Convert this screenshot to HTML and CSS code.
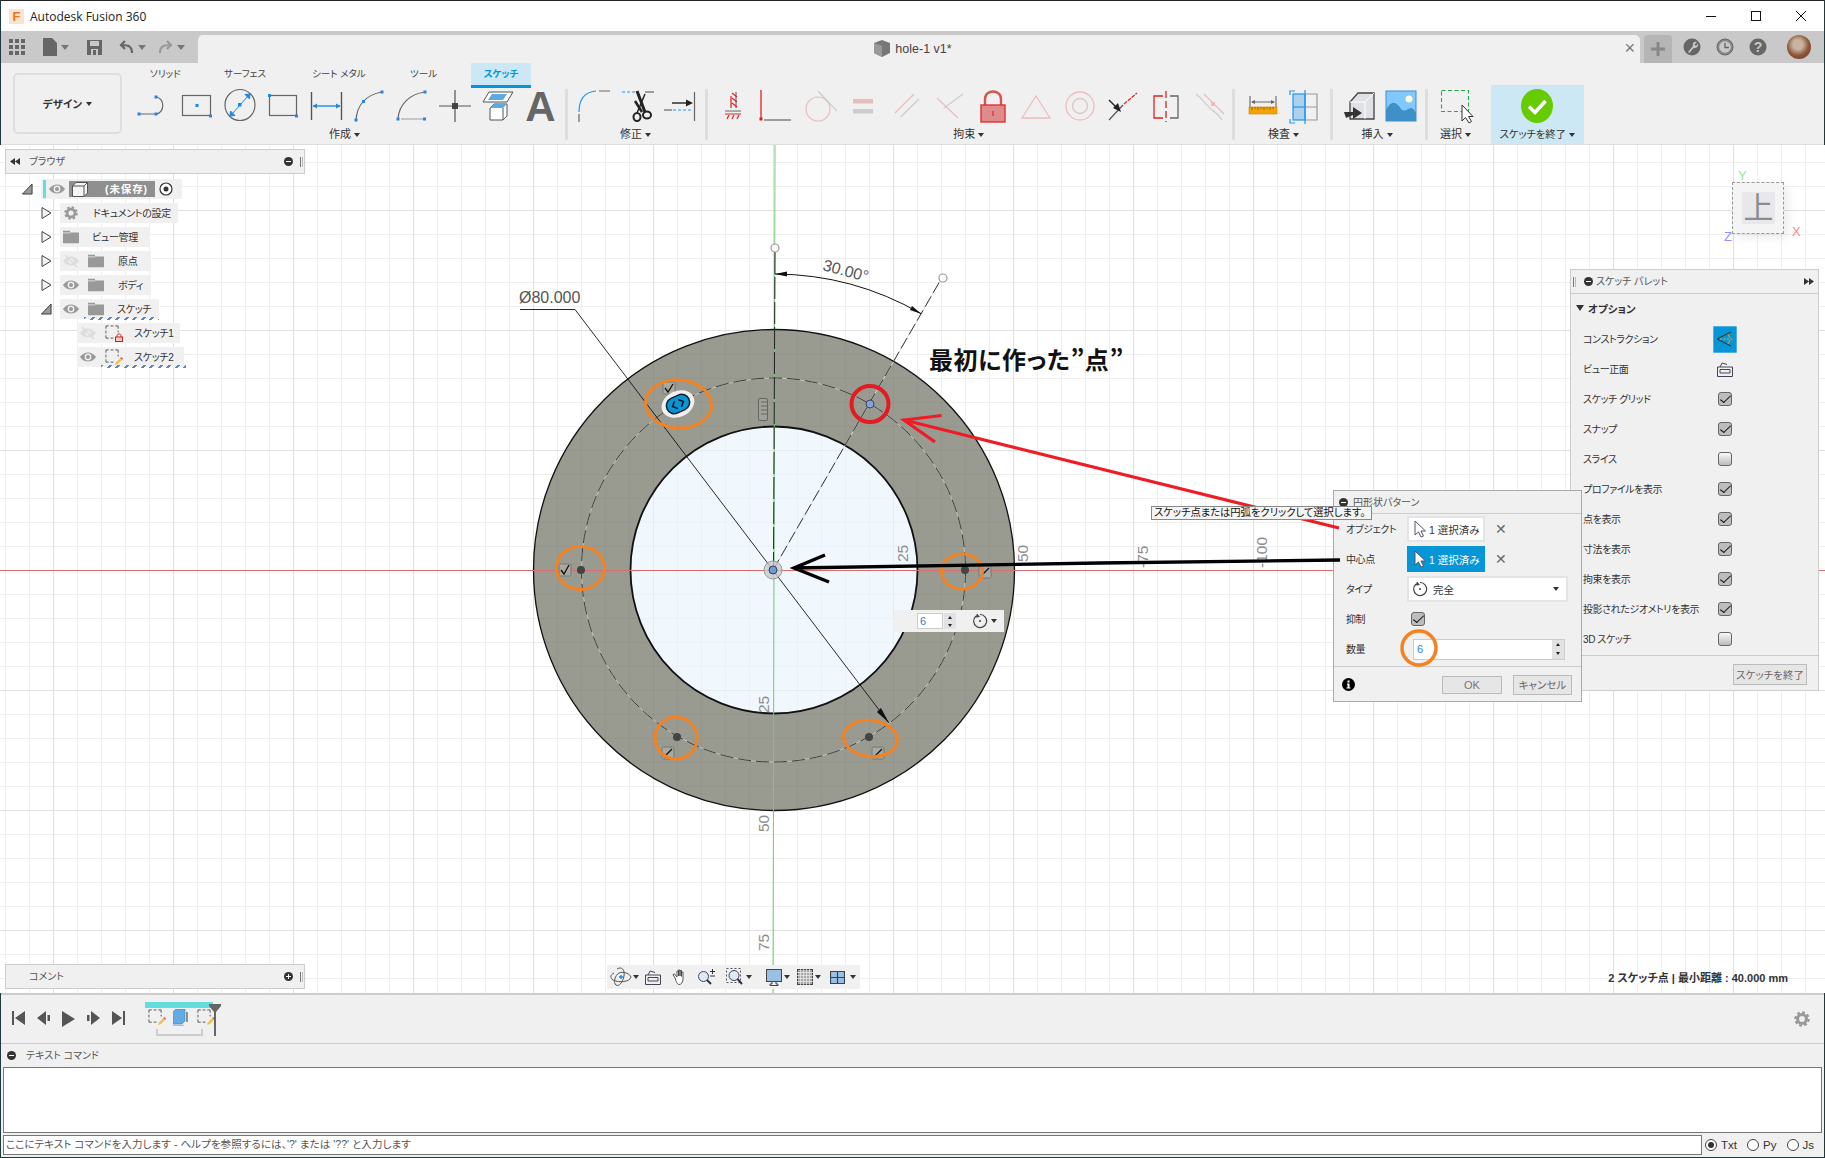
FILE: index.html
```html
<!DOCTYPE html>
<html lang="ja">
<head>
<meta charset="utf-8">
<title>Autodesk Fusion 360</title>
<link rel="stylesheet" href="styles.css">
</head>
<body>
<svg class="sprite" width="0" height="0">
  <defs>
    <symbol id="eye" viewBox="0 0 16 10"><path d="M0 5C4 -1 12 -1 16 5C12 11 4 11 0 5Z" fill="#999"/><circle cx="8" cy="5" r="3.4" fill="#f0f0f0"/><circle cx="8" cy="5" r="2" fill="#999"/></symbol>
    <symbol id="eyeoff" viewBox="0 0 16 12"><path d="M0 6C4 0 12 0 16 6C12 12 4 12 0 6Z" fill="#ddd"/><circle cx="8" cy="6" r="2.6" fill="#f0f0f0"/><path d="M2 0L14 12" stroke="#ddd" stroke-width="1.6"/></symbol>
    <symbol id="folder" viewBox="0 0 16 13"><path d="M0 0H7V2H16V13H0Z" fill="#999"/><path d="M0 2.4H7" stroke="#eee" stroke-width=".8"/></symbol>
    <symbol id="gear" viewBox="0 0 18 18"><circle cx="9" cy="9" r="5" fill="none" stroke="#999" stroke-width="3.4"/><circle cx="9" cy="9" r="7.4" fill="none" stroke="#999" stroke-width="2.6" stroke-dasharray="3.2 2.6"/></symbol>
    <symbol id="sketchbox" viewBox="0 0 16 16"><path d="M1 1H14M1 1V14M1 14H10M14 1V8" fill="none" stroke="#555" stroke-dasharray="3 2"/></symbol>
    <symbol id="cursor" viewBox="0 0 12 18"><path d="M1 1V15L4.5 12L7 17L9.5 16L7 11H11.5Z" fill="#fff" stroke="#556" stroke-width="1"/></symbol>
    <symbol id="pencil" viewBox="0 0 10 10"><path d="M1 9L2 6L7 1L9 3L4 8Z" fill="#f5c04a"/><path d="M7 1L9 3L10 2L8 0Z" fill="#e44"/></symbol>
  </defs>
</svg>

<div class="window">
  <header class="titlebar">
    <span class="logo">F</span>
    <span class="app-name">Autodesk Fusion 360</span>
    <div class="win-controls">
      <svg class="win-btn" width="14" height="14" viewBox="0 0 14 14"><path d="M2 7.5H12" stroke="#111"/></svg>
      <svg class="win-btn" width="14" height="14" viewBox="0 0 14 14"><rect x="2.5" y="2.5" width="9" height="9" fill="none" stroke="#111"/></svg>
      <svg class="win-btn" width="14" height="14" viewBox="0 0 14 14"><path d="M2 2L12 12M12 2L2 12" stroke="#111"/></svg>
    </div>
  </header>

  <div class="tabbar">
    <div class="quick">
      <svg class="q-grid" width="16" height="16" viewBox="0 0 16 16"><path d="M0 0h4v4H0zM6 0h4v4H6zM12 0h4v4h-4zM0 6h4v4H0zM6 6h4v4H6zM12 6h4v4h-4zM0 12h4v4H0zM6 12h4v4H6zM12 12h4v4h-4z" fill="#666"/></svg>
      <svg class="q-doc" width="14" height="18" viewBox="0 0 14 18"><path d="M0 0H9L14 5V18H0Z" fill="#666"/></svg>
      <i class="caret q-c1"></i>
      <svg class="q-save" width="15" height="15" viewBox="0 0 15 15"><path d="M0 0H15V15H0Z" fill="#666"/><path d="M3 1H12V6H3ZM4 9H11V15H4Z" fill="#c8c8c8"/><path d="M6 10H9V15H6Z" fill="#666"/></svg>
      <svg class="q-undo" width="14" height="14" viewBox="0 0 14 14"><path d="M13 13C13 6 9 5 3 5M6 1L2 5L6 9" fill="none" stroke="#666" stroke-width="2.2"/></svg>
      <i class="caret q-c2"></i>
      <svg class="q-redo" width="14" height="14" viewBox="0 0 14 14"><path d="M1 13C1 6 5 5 11 5M8 1L12 5L8 9" fill="none" stroke="#999" stroke-width="2.2"/></svg>
      <i class="caret q-c3"></i>
    </div>
    <div class="doc-tab">
      <svg class="doc-cube" width="16" height="17" viewBox="0 0 16 17"><path d="M8 0L16 3V13L8 17L0 13V3Z" fill="#777"/><path d="M0 3L8 6V17L0 13Z" fill="#999"/></svg>
      <span class="doc-name">hole-1 v1*</span>
      <span class="doc-close">×</span>
    </div>
    <div class="plus-tab"><svg width="14" height="14" viewBox="0 0 14 14"><path d="M7 0V14M0 7H14" stroke="#888" stroke-width="3"/></svg></div>
    <div class="account">
      <svg width="18" height="18" viewBox="0 0 18 18"><circle cx="9" cy="9" r="8.5" fill="#666"/><path d="M5 14L10 8C9 5 11 3 14 4L11.5 6.5L13 8L15 5.5C16 8 13 11 10.5 10L6.5 15Z" fill="#c8c8c8"/></svg>
      <svg width="18" height="18" viewBox="0 0 18 18"><circle cx="9" cy="9" r="8" fill="#888" stroke="#666"/><circle cx="9" cy="9" r="5.8" fill="#c8c8c8"/><path d="M9 5V9.5H13" fill="none" stroke="#666" stroke-width="1.4"/></svg>
      <svg width="18" height="18" viewBox="0 0 18 18"><circle cx="9" cy="9" r="8.5" fill="#666"/><text class="q-mark" x="9" y="13.5">?</text></svg>
      <span class="avatar"></span>
    </div>
  </div>

  <div class="ribbon">
    <div class="design-btn">デザイン <i class="caret dark"></i></div>
    <div class="ribbon-main">
      <nav class="tabs">
        <span class="tab t1">ソリッド</span>
        <span class="tab t2">サーフェス</span>
        <span class="tab t3">シート メタル</span>
        <span class="tab t4">ツール</span>
        <span class="tab active">スケッチ</span>
      </nav>
      <div class="tools">
        <section class="group g-create">
          <div class="icons">
            <svg class="tool" viewBox="0 0 36 36"><path d="M3 26H20M20 9C29 10 29 25 20 26" fill="none" stroke="#666" stroke-width="1.2"/><path d="M1.500 24.500h3v3h-3zM18.500 24.500h3v3h-3zM18.500 7.500h3v3h-3z" fill="#1e88e5"/></svg>
            <svg class="tool" viewBox="0 0 36 36"><rect x="3.500" y="7.500" width="28" height="20" fill="none" stroke="#666" stroke-width="1.2"/><path d="M16.500 16h3v3h-3zM30 26.500h3v3h-3z" fill="#1e88e5"/></svg>
            <svg class="tool" viewBox="0 0 36 36"><ellipse cx="18" cy="17" rx="15" ry="15.500" fill="#f0f0f0" stroke="#666" stroke-width="1.2"/><path d="M10 26L26 8M8 28L13 27.500 8.500 23ZM28 6L23 6.500 27.500 11Z" fill="#1e88e5" stroke="#1e88e5"/><rect x="16" y="15" width="3.500" height="3.500" fill="#1e88e5"/></svg>
            <svg class="tool" viewBox="0 0 36 36"><rect x="4.500" y="7.500" width="27" height="20" fill="none" stroke="#666" stroke-width="1.2"/><path d="M3 6h3v3H3zM30 26.500h3v3h-3z" fill="#1e88e5"/></svg>
            <svg class="tool" viewBox="0 0 36 36"><path d="M3.500 4V32M33.500 4V32" stroke="#555" stroke-width="1.4"/><path d="M5 18H32" stroke="#1e88e5" stroke-width="1.4"/><path d="M4.500 18L9 15.500V20.500ZM32.500 18L28 15.500V20.500Z" fill="#1e88e5"/></svg>
            <svg class="tool" viewBox="0 0 36 36"><path d="M5 32C6 18 14 7 31 4" fill="none" stroke="#666" stroke-width="1.2"/><path d="M3.500 30.500h3v3h-3zM29.500 2.500h3v3h-3zM11 12h3v3h-3z" fill="#1e88e5"/></svg>
            <svg class="tool" viewBox="0 0 36 36"><path d="M4 31C5 16 16 6 31 4" fill="none" stroke="#666" stroke-width="1.2"/><path d="M7 31H29" stroke="#aaa" stroke-width="1.2"/><path d="M2.500 29.500h3v3h-3zM29 29.500h3v3h-3zM29.500 2.500h3v3h-3z" fill="#1e88e5"/></svg>
            <svg class="tool" viewBox="0 0 36 36"><path d="M18 2V34M2 18H34" stroke="#555" stroke-width="1.2"/><rect x="15" y="15" width="6" height="6" fill="#444"/></svg>
            <svg class="tool" viewBox="0 0 36 36"><path d="M9 4H33L27 14H3Z" fill="#fff" stroke="#555"/><path d="M12 6H27L23 12H8Z" fill="#5ea9e2"/><path d="M10 20L14 16H27V28L23 32H10Z" fill="#fff" stroke="#555"/><path d="M10 20H23L27 16H14Z" fill="#5ea9e2"/><path d="M23 20V32" stroke="#555"/></svg>
            <span class="tool big-a">A</span>
          </div>
          <div class="group-label">作成 <i class="caret dark"></i></div>
        </section>
        <i class="sep s1"></i>
        <section class="group g-modify">
          <div class="icons">
            <svg class="tool" viewBox="0 0 36 36"><path d="M2 24C2 11 8 4 19 3" fill="none" stroke="#2196f3" stroke-width="1.2"/><path d="M22 3H33M2 26V34" stroke="#666" stroke-width="1.2"/></svg>
            <svg class="tool" viewBox="0 0 36 36"><path d="M2 4H18" stroke="#2196f3" stroke-width="1.2" stroke-dasharray="3 2"/><path d="M25 4H34" stroke="#666" stroke-width="1.2"/><path d="M17 3L25 24" stroke="#222" stroke-width="3"/><path d="M25 6L17 25" stroke="#222" stroke-width="1.5"/><path d="M15 13L22 24" stroke="#222" stroke-width="2.500"/><ellipse cx="17" cy="29" rx="3.500" ry="4" fill="none" stroke="#222" stroke-width="2"/><ellipse cx="27" cy="27" rx="4" ry="3.500" fill="none" stroke="#222" stroke-width="2"/></svg>
            <svg class="tool" viewBox="0 0 36 36"><path d="M31.500 4V33" stroke="#666" stroke-width="1.2"/><path d="M9 15H25" stroke="#222" stroke-width="1.4"/><path d="M30 15L23 11.500V18.500Z" fill="#222"/><path d="M1 22H9" stroke="#666" stroke-width="1.2"/><path d="M10 22H30" stroke="#2196f3" stroke-width="1.2" stroke-dasharray="3 2"/></svg>
          </div>
          <div class="group-label">修正 <i class="caret dark"></i></div>
        </section>
        <i class="sep s2"></i>
        <section class="group g-constraint">
          <div class="icons">
            <svg class="ctool" viewBox="0 0 36 36"><path d="M21 4V20" stroke="#555"/><path d="M17 5L22 9M17 10L22 14M17 15L22 19M16 8V20" stroke="#d22" stroke-width="1.2"/><path d="M10 23H26" stroke="#666"/><path d="M10 26H26" stroke="#d22"/><path d="M12 31L14 27M17 31L19 27M22 31L24 27" stroke="#d22" stroke-width="1.2"/></svg>
            <svg class="ctool" viewBox="0 0 36 36"><path d="M3 2V30" stroke="#d22" stroke-width="1.300"/><rect x="1.500" y="29.500" width="3" height="3" fill="#c22"/><path d="M6 32H33" stroke="#666" stroke-width="1.200"/></svg>
            <svg class="ctool" viewBox="0 0 36 36"><circle cx="17" cy="21" r="12" fill="none" stroke="#eebcbc" stroke-width="1.200"/><path d="M17 3L36 23" stroke="#ccc" stroke-width="1.200"/></svg>
            <svg class="ctool" viewBox="0 0 36 36"><rect x="8" y="11" width="20" height="4.500" fill="#e8bcbc"/><rect x="8" y="21" width="20" height="4.500" fill="#ccc"/></svg>
            <svg class="ctool" viewBox="0 0 36 36"><path d="M7 25L26 6" stroke="#eebcbc" stroke-width="1.200"/><path d="M12.500 29L31 11" stroke="#ccc" stroke-width="1.200"/></svg>
            <svg class="ctool" viewBox="0 0 36 36"><path d="M5 10L26 30" stroke="#eebcbc" stroke-width="1.200"/><path d="M12 20L31 6" stroke="#ccc" stroke-width="1.200"/></svg>
            <svg class="ctool" viewBox="0 0 36 36"><path d="M10 18V11C10 1 26 1 26 11V18" fill="none" stroke="#d9534f" stroke-width="2.400"/><rect x="6" y="17" width="24" height="17" fill="#e08a8a" stroke="#d33" stroke-width="1.400"/><path d="M18 23V28" stroke="#c22"/></svg>
            <svg class="ctool" viewBox="0 0 36 36"><path d="M18 8L32 30H4Z" fill="none" stroke="#eebcbc" stroke-width="1.300"/></svg>
            <svg class="ctool" viewBox="0 0 36 36"><circle cx="18" cy="18" r="14" fill="none" stroke="#eebcbc" stroke-width="1.300"/><circle cx="18" cy="18" r="7.500" fill="none" stroke="#d8c8c8" stroke-width="1.300"/></svg>
            <svg class="ctool" viewBox="0 0 36 36"><path d="M4 32L18 17" stroke="#555" stroke-width="1.200"/><path d="M19 16L32 5" stroke="#d22" stroke-width="1.200" stroke-dasharray="4 1"/><path d="M4 12L11 19" stroke="#222" stroke-width="1.400"/><path d="M16 24L8 20L13 15Z" fill="#222"/></svg>
            <svg class="ctool" viewBox="0 0 36 36"><path d="M15 8H6V30H15" fill="none" stroke="#d22" stroke-width="1.300"/><path d="M18 3V34" stroke="#d22" stroke-width="1.300" stroke-dasharray="7 3"/><path d="M22 8H30V30H22" fill="none" stroke="#666" stroke-width="1.300"/></svg>
            <svg class="ctool" viewBox="0 0 36 36"><path d="M4 6C10 10 13 16 16 18C20 24 24 22 30 32" fill="none" stroke="#ccc" stroke-width="1.200"/><path d="M12 6L32 26" stroke="#eebcbc" stroke-width="1.200"/><rect x="19" y="14" width="4" height="4" fill="#eebcbc"/></svg>
          </div>
          <div class="group-label">拘束 <i class="caret dark"></i></div>
        </section>
        <i class="sep s3"></i>
        <section class="group g-inspect">
          <div class="icons">
            <svg class="tool-w" viewBox="0 0 36 36"><path d="M5 8V20M31 8V20M7 14H29" stroke="#666" stroke-width="1.100"/><path d="M6 14L10 12V16ZM30 14L26 12V16Z" fill="#666"/><rect x="4" y="19" width="28" height="7" fill="#f5a300" stroke="#c98500" stroke-width=".6"/><path d="M7 19v3M10 19v2M13 19v3M16 19v2M19 19v3M22 19v2M25 19v3M28 19v2" stroke="#7a5600" stroke-width=".7"/></svg>
            <svg class="tool-w" viewBox="0 0 36 36"><rect x="6" y="6" width="12" height="26" fill="#acd0ee" stroke="#2196f3" stroke-width="1.200"/><path d="M6 19H18" stroke="#2196f3" stroke-width="1.200"/><path d="M18 6H30V32H18M18 19H30" fill="none" stroke="#999" stroke-width="1.200"/><path d="M8 3H3V7M8 35H3V31M18 2V36" fill="none" stroke="#2196f3" stroke-width="1.200"/></svg>
          </div>
          <div class="group-label">検査 <i class="caret dark"></i></div>
        </section>
        <i class="sep s4"></i>
        <section class="group g-insert">
          <div class="icons">
            <svg class="tool-w" viewBox="0 0 36 36"><path d="M9 14L17 5H33V31H9Z" fill="#dfe1e4" stroke="#444" stroke-width="1.300"/><path d="M9 14H24L33 5M24 14V31" fill="none" stroke="#fff" stroke-width="1"/><path d="M3 24H12V19L21 25L12 31V27L5 30Z" fill="#333"/></svg>
            <svg class="tool-w" viewBox="0 0 36 36"><rect x="3" y="3" width="30" height="30" fill="#80c8ff" stroke="#3f8fc9"/><circle cx="26" cy="11" r="3.500" fill="#fffbd0"/><path d="M3 33V22C8 12 13 13 18 21C22 25 25 20 28 20C30 20 32 23 33 25V33Z" fill="#3f8fc9"/></svg>
          </div>
          <div class="group-label">挿入 <i class="caret dark"></i></div>
        </section>
        <i class="sep s5"></i>
        <section class="group g-select">
          <div class="icons">
            <svg class="tool-w" viewBox="0 0 40 36"><rect x="5.500" y="2.500" width="27" height="21" fill="none" stroke="#22aa44" stroke-width="1.100" stroke-dasharray="4 2.500"/><path d="M26 17V33L29.500 29.500L33 35L35.500 33.500L32.500 28.500H37Z" fill="#fff" stroke="#333"/></svg>
          </div>
          <div class="group-label">選択 <i class="caret dark"></i></div>
        </section>
        <section class="finish">
          <svg class="finish-ico" width="32" height="34" viewBox="0 0 32 34"><ellipse cx="16" cy="17" rx="16" ry="17" fill="#66cc00"/><path d="M8 17.500L14 23.500L24.500 12" fill="none" stroke="#fff" stroke-width="3.500"/></svg>
          <div class="group-label finish-label">スケッチを終了 <i class="caret dark"></i></div>
        </section>
      </div>
    </div>
  </div>

  <main class="viewport">
    <svg class="layer" viewBox="0 145 1825 848" width="1825" height="848">
      <defs>
        <pattern id="minor" patternUnits="userSpaceOnUse" x="5" y="18" width="24" height="24"><path d="M.5 0V24M0 .5H24" stroke="#efefef" fill="none"/></pattern>
        <pattern id="major" patternUnits="userSpaceOnUse" x="53" y="90" width="120" height="120"><path d="M.5 0V120M0 .5H120" stroke="#e0e0e0" fill="none"/></pattern>
        <pattern id="ringgrid" patternUnits="userSpaceOnUse" x="5" y="18" width="24" height="24"><path d="M.5 0V24M0 .5H24" stroke="#000" stroke-opacity=".035" fill="none"/></pattern>
      </defs>
      <rect x="0" y="145" width="1825" height="848" fill="#fff"/>
      <rect x="0" y="145" width="1825" height="848" fill="url(#minor)"/>
      <rect x="0" y="145" width="1825" height="848" fill="url(#major)"/>
      <circle cx="774" cy="570" r="143.500" fill="#e6f3fd" fill-opacity=".6"/>
      <path d="M774 329.500A240.500 240.500 0 1 1 773.900 329.500ZM774 426.500A143.500 143.500 0 1 0 774.100 426.500Z" fill="#94968b" fill-opacity=".95" fill-rule="evenodd"/>
      <path d="M774 329.500A240.500 240.500 0 1 1 773.900 329.500ZM774 426.500A143.500 143.500 0 1 0 774.100 426.500Z" fill="url(#ringgrid)" fill-rule="evenodd"/>
      <circle cx="774" cy="570" r="240.500" fill="none" stroke="#111" stroke-width="1.300"/>
      <circle cx="774" cy="570" r="143.500" fill="none" stroke="#111" stroke-width="1.800"/>
      <path d="M0 570.500H1825" stroke="#d96c6c"/>
      <path d="M775 145L773 993" stroke="#74cc74"/>
      <text class="axis" transform="translate(908 562) rotate(-90)">25</text>
      <text class="axis" transform="translate(1028 562) rotate(-90)">50</text>
      <text class="axis" transform="translate(1148 568) rotate(-90)">-75</text>
      <text class="axis" transform="translate(1267 568) rotate(-90)">-100</text>
      <text class="axis" transform="translate(769 713) rotate(-90)">25</text>
      <text class="axis" transform="translate(769 832) rotate(-90)">50</text>
      <text class="axis" transform="translate(769 951) rotate(-90)">75</text>
      <circle cx="773.500" cy="570" r="192" fill="none" stroke="#c0c2b8"/>
      <circle cx="773.500" cy="570" r="192" fill="none" stroke="#3c3c3c" stroke-dasharray="13 5"/>
      <path d="M773 570L943 276" stroke="#ddd"/>
      <path d="M773 570L940 281" stroke="#333" stroke-dasharray="12 4"/>
      <path d="M775 252L773.500 570" stroke="#222" stroke-dasharray="22 3"/>
      <path d="M520 309.500H575L889 723" fill="none" stroke="#111" stroke-width=".9"/>
      <path d="M889 723L881 708 877 712Z" fill="#111"/>
      <path d="M775 274A296 296 0 0 1 921 313.600" fill="none" stroke="#111" stroke-width="1"/>
      <path d="M775 274L787 271.500V276.500ZM921.500 314L910 310 912 306Z" fill="#111"/>
      <circle cx="775" cy="248" r="4" fill="#fff" stroke="#999" stroke-width="1.200"/>
      <circle cx="943" cy="278" r="4" fill="#fff" stroke="#999" stroke-width="1.200"/>
      <text class="dim" x="519" y="303">Ø80.000</text>
      <text class="dim" transform="translate(822 270) rotate(15)">30.00°</text>
      <g class="ruler-mark"><rect x="758.500" y="398.500" width="9" height="22" rx="1.500" fill="#a0a297" stroke="#666"/><path d="M761 402H767M761 406H767M761 410H767M761 414H767" stroke="#666"/></g>
      <g class="points">
        <circle cx="581" cy="570" r="4" fill="#444"/><circle cx="965" cy="570" r="4" fill="#444"/>
        <circle cx="677" cy="737" r="4" fill="#444"/><circle cx="869" cy="737" r="4" fill="#444"/>
      </g>
      <g class="hint" fill="#a8aa9f" stroke="#777"><rect x="559" y="564" width="12" height="12" rx="1.500"/><rect x="979" y="566" width="12" height="12" rx="1.500"/><rect x="662" y="747" width="12" height="12" rx="1.500"/><rect x="872" y="747" width="12" height="12" rx="1.500"/><rect x="663" y="382" width="12" height="12" rx="1.500"/></g>
      <path d="M561 570L564 574L569 565M981 576L989 568M664 757L672 749M874 757L882 749M665 388L668 392L673 384" fill="none" stroke="#111" stroke-width="1.300"/>
      <circle cx="870" cy="404" r="4" fill="#7fa3dc" stroke="#445"/>
      <circle cx="773" cy="570" r="9" fill="#c8c8c8" fill-opacity=".8" stroke="#999"/>
      <circle cx="773" cy="570" r="4" fill="#6f97dc" stroke="#345"/>
      <g transform="rotate(-25 678 404)"><ellipse cx="678" cy="404" rx="17" ry="13" fill="#fff" fill-opacity=".85"/><rect x="666" y="396" width="24" height="16" rx="8" fill="#0696d7" stroke="#123" stroke-width="1.500"/><path d="M676 400L672 404L676 408M680 400L684 404L680 408" fill="none" stroke="#112" stroke-width="1.500"/></g>
    </svg>

    <div class="panel-bar browser-bar">
      <svg class="rew" width="10" height="7" viewBox="0 0 10 7"><path d="M5 0V7L0 3.500ZM10 0V7L5 3.500Z" fill="#333"/></svg>
      <span class="bar-title">ブラウザ</span>
      <i class="round-minus"></i>
      <i class="grip"></i>
    </div>

    <div class="tree">
      <div class="row lvl0">
        <svg class="twist" width="12" height="12" viewBox="0 0 12 12"><path d="M.5 11.500L11 .5V11.500Z" fill="#999" stroke="#333"/></svg>
        <div class="chip">
          <i class="teal"></i>
          <svg class="ico16" viewBox="0 0 16 10"><use href="#eye"/></svg>
          <div class="root-box">
            <svg width="16" height="15" viewBox="0 0 16 15"><path d="M.5 4L4 .5H15.500V11L12 14.500H.5Z" fill="#f4f4f4" stroke="#555"/><path d="M.5 4H12V14.500M12 4L15.500 .5" fill="none" stroke="#555"/></svg>
            <span class="root-name">(未保存)</span>
          </div>
          <svg class="radio-ico" width="14" height="14" viewBox="0 0 14 14"><circle cx="7" cy="7" r="6" fill="#fff" stroke="#333" stroke-width="1.200"/><circle cx="7" cy="7" r="2.500" fill="#333"/></svg>
        </div>
      </div>
      <div class="row lvl1">
        <svg class="twist" width="10" height="12" viewBox="0 0 10 12"><path d="M.5 .5L9.500 6L.5 11.500Z" fill="#f4f4f4" stroke="#444"/></svg>
        <div class="chip w118">
          <svg class="ico16" viewBox="0 0 18 18"><use href="#gear"/></svg>
          <span class="lbl m14">ドキュメントの設定</span>
        </div>
      </div>
      <div class="row lvl1">
        <svg class="twist" width="10" height="12" viewBox="0 0 10 12"><path d="M.5 .5L9.500 6L.5 11.500Z" fill="#f4f4f4" stroke="#444"/></svg>
        <div class="chip w90">
          <svg class="ico16" viewBox="0 0 16 13"><use href="#folder"/></svg>
          <span class="lbl m13">ビュー管理</span>
        </div>
      </div>
      <div class="row lvl1">
        <svg class="twist" width="10" height="12" viewBox="0 0 10 12"><path d="M.5 .5L9.500 6L.5 11.500Z" fill="#f4f4f4" stroke="#444"/></svg>
        <div class="chip w91">
          <svg class="ico16" viewBox="0 0 16 12"><use href="#eyeoff"/></svg>
          <svg class="ico16 ml9" viewBox="0 0 16 13"><use href="#folder"/></svg>
          <span class="lbl m14">原点</span>
        </div>
      </div>
      <div class="row lvl1">
        <svg class="twist" width="10" height="12" viewBox="0 0 10 12"><path d="M.5 .5L9.500 6L.5 11.500Z" fill="#f4f4f4" stroke="#444"/></svg>
        <div class="chip w91">
          <svg class="ico16" viewBox="0 0 16 10"><use href="#eye"/></svg>
          <svg class="ico16 ml9" viewBox="0 0 16 13"><use href="#folder"/></svg>
          <span class="lbl m14">ボディ</span>
        </div>
      </div>
      <div class="row lvl1">
        <svg class="twist" width="12" height="12" viewBox="0 0 12 12"><path d="M.5 11.500L11 .5V11.500Z" fill="#999" stroke="#333"/></svg>
        <div class="chip w99 dotted">
          <svg class="ico16" viewBox="0 0 16 10"><use href="#eye"/></svg>
          <svg class="ico16 ml9" viewBox="0 0 16 13"><use href="#folder"/></svg>
          <span class="lbl m13">スケッチ</span>
        </div>
      </div>
      <div class="row lvl2">
        <div class="chip w103">
          <svg class="ico16" viewBox="0 0 16 12"><use href="#eyeoff"/></svg>
          <span class="sk-ico ml9"><svg width="15" height="15" viewBox="0 0 16 16"><use href="#sketchbox"/></svg><svg class="badge" width="8" height="9" viewBox="0 0 8 9"><path d="M2 4V2.500C2 .5 6 .5 6 2.500V4" fill="none" stroke="#c22"/><rect x=".5" y="4" width="7" height="4.500" fill="#f7c6c6" stroke="#c22"/></svg></span>
          <span class="lbl m13">スケッチ1</span>
        </div>
      </div>
      <div class="row lvl2">
        <div class="chip w107 dotted">
          <svg class="ico16" viewBox="0 0 16 10"><use href="#eye"/></svg>
          <span class="sk-ico ml9"><svg width="15" height="15" viewBox="0 0 16 16"><use href="#sketchbox"/></svg><svg class="badge" width="9" height="9" viewBox="0 0 10 10"><use href="#pencil"/></svg></span>
          <span class="lbl m13">スケッチ2</span>
        </div>
      </div>
    </div>

    <div class="panel-bar comment-bar">
      <span class="bar-title">コメント</span>
      <i class="round-plus"></i>
      <i class="grip"></i>
    </div>

    <div class="cube">
      <span class="cube-face">上</span>
      <span class="axis-y">Y</span><span class="axis-x">X</span><span class="axis-z">Z</span>
    </div>

    <aside class="palette">
      <div class="pal-head">
        <i class="grip"></i><i class="round-minus"></i>
        <span class="bar-title">スケッチ パレット</span>
        <svg class="ffwd" width="10" height="7" viewBox="0 0 10 7"><path d="M0 0V7L5 3.500ZM5 0V7L10 3.500Z" fill="#333"/></svg>
      </div>
      <div class="pal-section"><i class="caret dark big"></i> オプション</div>
      <div class="pal-row"><span>コンストラクション</span>
        <span class="ctrl-btn"><svg width="18" height="16" viewBox="0 0 18 16"><path d="M1 8L15 1M1 8L15 15" stroke="#233" fill="none"/><path d="M4 8H17" stroke="#f59a23" stroke-dasharray="2 1.500"/><path d="M12 3L14 7M12 13L14 9" stroke="#f59a23"/></svg></span></div>
      <div class="pal-row"><span>ビュー正面</span>
        <svg class="look" width="16" height="15" viewBox="0 0 16 15"><path d="M.5 5H15.500V14.500H.5ZM3 5L5 1L10 2.500M3 7.500H13V11H3Z" fill="none" stroke="#445"/></svg></div>
      <div class="pal-row"><span>スケッチ グリッド</span><i class="chk on"></i></div>
      <div class="pal-row"><span>スナップ</span><i class="chk on"></i></div>
      <div class="pal-row"><span>スライス</span><i class="chk"></i></div>
      <div class="pal-row"><span>プロファイルを表示</span><i class="chk on"></i></div>
      <div class="pal-row"><span>点を表示</span><i class="chk on"></i></div>
      <div class="pal-row"><span>寸法を表示</span><i class="chk on"></i></div>
      <div class="pal-row"><span>拘束を表示</span><i class="chk on"></i></div>
      <div class="pal-row"><span>投影されたジオメトリを表示</span><i class="chk on"></i></div>
      <div class="pal-row"><span>3D スケッチ</span><i class="chk"></i></div>
      <div class="pal-foot"><button class="btn finish-btn">スケッチを終了</button></div>
    </aside>

    <div class="count-box">
      <span class="count-input">6</span>
      <span class="spin small"><i class="up"></i><i class="down"></i></span>
      <svg class="rot" width="16" height="16" viewBox="0 0 16 16"><path d="M4 3A6.500 6.500 0 1 0 8 1.500" fill="none" stroke="#444" stroke-width="1.200"/><path d="M5 .5L3.500 4.500L8 4Z" fill="#444"/><circle cx="8" cy="8" r="1" fill="#444"/></svg>
      <i class="caret dark"></i>
    </div>

    <section class="dialog">
      <div class="dlg-head"><i class="round-minus"></i><span class="bar-title">円形状パターン</span></div>
      <div class="dlg-row"><span>オブジェクト</span><span class="sel-btn"><svg width="12" height="18" viewBox="0 0 12 18"><use href="#cursor"/></svg>1 選択済み</span><span class="x-mark">✕</span></div>
      <div class="dlg-row"><span>中心点</span><span class="sel-btn on"><svg width="12" height="18" viewBox="0 0 12 18"><use href="#cursor"/></svg>1 選択済み</span><span class="x-mark">✕</span></div>
      <div class="dlg-row"><span>タイプ</span><span class="select"><svg width="16" height="16" viewBox="0 0 16 16"><path d="M4 3A6.500 6.500 0 1 0 8 1.500" fill="none" stroke="#444" stroke-width="1.200"/><path d="M5 .5L3.500 4.500L8 4Z" fill="#444"/><circle cx="8" cy="8" r="1" fill="#444"/></svg>完全<i class="caret dark right"></i></span></div>
      <div class="dlg-row"><span>抑制</span><i class="chk on dlg-chk"></i></div>
      <div class="dlg-row"><span>数量</span><span class="num-input">6<span class="spin"><i class="up"></i><i class="down"></i></span></span></div>
      <div class="dlg-foot">
        <svg width="13" height="13" viewBox="0 0 13 13"><circle cx="6.500" cy="6.500" r="6.500" fill="#000"/><path d="M5.500 2.500h2v2h-2zM5 5.500h2.500V9.500h1v1h-4v-1h1V6.500H5z" fill="#fff"/></svg>
        <button class="btn ok">OK</button>
        <button class="btn cancel">キャンセル</button>
      </div>
    </section>

    <svg class="layer annot" viewBox="0 145 1825 848" width="1825" height="848">
      <ellipse cx="870" cy="404" rx="18.500" ry="18" fill="none" stroke="#e31b23" stroke-width="4"/>
      <g fill="none" stroke="#f58220" stroke-width="3">
        <ellipse cx="678.500" cy="404" rx="33" ry="24" transform="rotate(4 678.500 404)"/>
        <ellipse cx="580.500" cy="568" rx="24" ry="21.500"/>
        <ellipse cx="962" cy="571.500" rx="20.500" ry="17.500"/>
        <ellipse cx="676" cy="738" rx="21" ry="21"/>
        <ellipse cx="870.500" cy="738.500" rx="27" ry="18" transform="rotate(6 870.500 738.500)"/>
      </g>
      <ellipse cx="1419" cy="648" rx="17" ry="17" fill="none" stroke="#f58220" stroke-width="3.500"/>
      <path d="M1339 528L904 420M941.500 415.500L904 420L935 442" fill="none" stroke="#ee1c25" stroke-width="3.200"/>
      <path d="M1340 560L1100 563L794 568M825 555L794 568L829 582" fill="none" stroke="#000" stroke-width="3.400"/>
      <text class="note" x="929" y="369">最初に作った”点”</text>
    </svg>

    <div class="tooltip">スケッチ点または円弧をクリックして選択します。</div>

    <div class="status">2 スケッチ点 | 最小距離 : 40.000 mm</div>

    <div class="navbar">
      <svg class="nav-i i-orbit" width="22" height="20" viewBox="0 0 22 20"><path d="M7 2C12 -1 15 3 14 9C13 15 9 20 6 18C3 16 5 8 9 6C14 4 20 7 21 10C20 15 9 16 3 13C0 11 0 8 4 6" fill="none" stroke="#555"/><path d="M9 10H13M11 8V12" stroke="#1e88e5" stroke-width="1.400"/></svg><i class="caret dark c-a"></i>
      <svg class="nav-i i-look" width="16" height="15" viewBox="0 0 16 15"><path d="M.5 5H15.500V14.500H.5ZM3 5L5 1L10 2.500M3 7.500H13V11H3Z" fill="none" stroke="#445"/></svg>
      <svg class="nav-i i-hand" width="16" height="16" viewBox="0 0 16 16"><path d="M3 9L1 5.500L2.500 5L5 8V2L6.500 2V7V1L8 1V7V1.500L9.500 1.500V7.500V3L11 3V10C11 13 9.500 15.500 7 15.500C5 15.500 4 12 3 9Z" fill="#fff" stroke="#444" stroke-width=".9"/></svg>
      <svg class="nav-i i-zoom" width="20" height="16" viewBox="0 0 20 16"><circle cx="6.500" cy="7.500" r="5" fill="#dbeaf5" stroke="#445"/><path d="M10 11L14 15" stroke="#334" stroke-width="2"/><path d="M13 2.500H18M15.500 0V5M13 7H18" stroke="#333"/></svg>
      <svg class="nav-i i-fit" width="18" height="18" viewBox="0 0 18 18"><rect x=".5" y=".5" width="14" height="14" fill="none" stroke="#555" stroke-dasharray="2 2"/><circle cx="8" cy="7.500" r="5" fill="#dbeaf5" stroke="#445"/><path d="M11.500 11L16 16" stroke="#334" stroke-width="2"/></svg><i class="caret dark c-b"></i>
      <svg class="nav-i i-disp" width="16" height="17" viewBox="0 0 16 17"><rect x=".5" y=".5" width="15" height="12" fill="#9ac0e4" stroke="#444"/><path d="M6 13V15H4V16.500H12V15H10V13" fill="none" stroke="#444"/></svg><i class="caret dark c-c"></i>
      <svg class="nav-i i-grid" width="16" height="16" viewBox="0 0 16 16"><rect x=".5" y=".5" width="15" height="15" fill="#aaa" stroke="#444"/><path d="M3.500 0V16M6.500 0V16M9.500 0V16M12.500 0V16M0 3.500H16M0 6.500H16M0 9.500H16M0 12.500H16" stroke="#eee" stroke-width=".7"/></svg><i class="caret dark c-d"></i>
      <svg class="nav-i i-view" width="15" height="13" viewBox="0 0 15 13"><path d="M.5 .5H14.500V12.500H.5ZM7.500 .5V12.500M.5 6.500H14.500" fill="#9ac0e4" stroke="#345" stroke-width="1.200"/></svg><i class="caret dark c-e"></i>
    </div>
  </main>

  <div class="timeline">
    <div class="transport">
      <svg width="13" height="14" viewBox="0 0 13 14"><path d="M0 0H2V14H0ZM13 0V14L3 7Z" fill="#555"/></svg>
      <svg width="13" height="14" viewBox="0 0 13 14"><path d="M0 7L9 0V14ZM10.500 4H13V10H10.500Z" fill="#555"/></svg>
      <svg width="13" height="16" viewBox="0 0 13 16"><path d="M0 0L13 8L0 16Z" fill="#555"/></svg>
      <svg width="13" height="14" viewBox="0 0 13 14"><path d="M13 7L4 0V14ZM2.500 4H0V10H2.500Z" fill="#555"/></svg>
      <svg width="13" height="14" viewBox="0 0 13 14"><path d="M13 0H11V14H13ZM0 0V14L10 7Z" fill="#555"/></svg>
    </div>
    <div class="history">
      <i class="hist-bar"></i>
      <div class="hist-items">
        <span class="sk-ico"><svg width="15" height="15" viewBox="0 0 16 16"><use href="#sketchbox"/></svg><svg class="badge" width="9" height="9" viewBox="0 0 10 10"><use href="#pencil"/></svg></span>
        <svg width="15" height="17" viewBox="0 0 15 17"><path d="M0 3L3 0H12V12L9 15H0Z" fill="#62abe4" stroke="#3f8fc9" stroke-width=".7"/><path d="M0 16.500H11" stroke="#bbb" stroke-width="1.400"/><path d="M14 3V13" stroke="#333"/></svg>
        <span class="sk-ico"><svg width="15" height="15" viewBox="0 0 16 16"><use href="#sketchbox"/></svg><svg class="badge" width="9" height="9" viewBox="0 0 10 10"><use href="#pencil"/></svg></span>
      </div>
      <i class="hist-group"></i>
      <svg class="marker" width="12" height="32" viewBox="0 0 12 32"><path d="M0 0H12V2L7 8V32H5V8L0 2Z" fill="#666"/></svg>
    </div>
    <svg class="tl-gear" width="16" height="16" viewBox="0 0 18 18"><use href="#gear"/></svg>
  </div>

  <div class="textcmd">
    <div class="tc-head"><i class="round-minus"></i><span class="bar-title">テキスト コマンド</span></div>
    <div class="tc-output"></div>
    <div class="tc-foot">
      <div class="tc-input">ここにテキスト コマンドを入力します - ヘルプを参照するには、'?' または '??' と入力します</div>
      <div class="tc-radios">
        <i class="rad on"></i><span>Txt</span>
        <i class="rad"></i><span>Py</span>
        <i class="rad"></i><span>Js</span>
      </div>
    </div>
  </div>
</div>
</body>
</html>
```

FILE: styles.css
```css
* { box-sizing: border-box; }
html, body { margin: 0; padding: 0; }
body {
  width: 1825px; height: 1158px; overflow: hidden;
  font-family: "Liberation Sans", "Noto Sans CJK JP", sans-serif;
  font-size: 10.5px; color: #333; font-feature-settings: "palt";
}
i { display: inline-block; font-style: normal; }
.sprite { position: absolute; }
.window {
  width: 1825px; height: 1158px; display: flex; flex-direction: column;
  border-left: 1px solid #1e3a3a; border-right: 1px solid #1e3a3a; border-bottom: 1px solid #1e3a3a;
  background: #f0f0f0; position: relative;
}
.caret { width: 0; height: 0; border-left: 4px solid transparent; border-right: 4px solid transparent; border-top: 5px solid #777; vertical-align: middle; }
.caret.dark { border-left-width: 3px; border-right-width: 3px; border-top: 4px solid #333; }
.caret.big { border-left-width: 4px; border-right-width: 4px; border-top-width: 6px; }

/* title bar */
.titlebar { height: 31px; background: #fff; border-top: 1px solid #222; display: flex; align-items: center; padding-left: 8px; flex: none; }
.logo { width: 15px; height: 15px; background: #fbe3cf; color: #e8761e; font: bold 13px/15px "Liberation Sans", sans-serif; text-align: center; }
.app-name { margin-left: 6px; font: 12px "Open Sans", sans-serif; color: #222; }
.win-controls { margin-left: auto; margin-right: 16px; display: flex; gap: 31px; }

/* tab bar */
.tabbar { height: 32px; background: #c9c9c9; display: flex; flex: none; align-items: flex-end; }
.quick { width: 197px; height: 32px; display: flex; align-items: center; flex: none; }
.q-grid { margin-left: 8px; }
.q-doc { margin-left: 18px; }
.q-c1 { margin-left: 4px; }
.q-save { margin-left: 18px; }
.q-undo { margin-left: 17px; }
.q-c2 { margin-left: 5px; }
.q-redo { margin-left: 13px; }
.q-c3 { margin-left: 4px; }
.doc-tab { width: 1442px; height: 28px; background: #f0f0f0; border-radius: 5px 5px 0 0; display: flex; align-items: center; justify-content: center; position: relative; flex: none; padding: 0 12px 1px 0; }
.doc-cube { margin-right: 5px; }
.doc-name { font: 12.5px "Liberation Sans", sans-serif; color: #444; }
.doc-close { position: absolute; right: 5px; top: 3px; font: 18px "Liberation Sans", sans-serif; color: #777; }
.plus-tab { width: 28px; height: 28px; margin-left: 4px; background: #b5b5b5; border-radius: 4px 4px 0 0; display: flex; align-items: center; justify-content: center; flex: none; }
.account { height: 32px; display: flex; align-items: center; gap: 15px; margin-left: 11px; flex: none; }
.avatar { width: 24px; height: 24px; border-radius: 50%; margin-left: 5px; background: radial-gradient(circle at 45% 40%, #c9b2a0 0 25%, #8a5a3a 55%, #7a2a20 100%); }
.q-mark { font: bold 14px "Liberation Sans", sans-serif; fill: #c8c8c8; text-anchor: middle; }

/* ribbon */
.ribbon { height: 82px; background: #f0f0f0; border-bottom: 1px solid #ddd; display: flex; flex: none; }
.design-btn { width: 109px; height: 61px; margin: 10px 0 0 12px; border: 2px solid #dedede; border-radius: 5px; display: flex; align-items: center; justify-content: center; gap: 4px; font-weight: bold; color: #333; flex: none; }
.ribbon-main { flex: 1; display: flex; flex-direction: column; min-width: 0; }
.tabs { height: 22px; display: flex; align-items: flex-start; position: relative; flex: none; }
.tab { line-height: 22px; white-space: nowrap; color: #444; font-size: 9.5px; flex: none; }
.t1 { margin-left: 28px; width: 74px; }
.t2 { width: 88px; }
.t3 { width: 98px; }
.t4 { width: 61px; }
.tab.active { position: relative; width: 60px; height: 25px; text-align: center; background: #cce8f5; color: #0696d7; font-weight: bold; border-bottom: 3px solid #0696d7; z-index: 1; }
.tools { flex: 1; display: flex; }
.group { display: flex; flex-direction: column; flex: none; }
.icons { display: flex; height: 41px; padding-top: 3px; }
.tool, .ctool, .tool-w { width: 36px; height: 36px; flex: none; }
.tool { margin: 0 3.5px; }
.ctool { margin: 0 3.7px; }
.tool-w { margin: 0 3px; }
.g-select .tool-w { width: 40px; margin: 0 1px; }
.big-a { display: block; font: bold 42px/38px "Liberation Sans", sans-serif; color: #666; text-align: center; }
.group-label { height: 18px; line-height: 16px; text-align: center; white-space: nowrap; color: #333; font-size: 11px; }
.finish-label { font-size: 10.5px; letter-spacing: -.2px; }
.sep { width: 3px; height: 51px; margin-top: 4px; background: #dedede; flex: none; }
.g-create { margin-left: 10px; }
.g-create .group-label { padding-right: 5px; }
.g-modify .group-label { padding-right: 4px; }
.g-constraint .group-label { padding-right: 5px; }
.s1 { margin-left: 3px; }
.g-modify { margin-left: 5px; }
.s2 { margin-left: 3px; }
.g-constraint { margin-left: 3px; }
.s3 { margin-left: 0; }
.g-inspect { margin-left: 7px; }
.s4 { margin-left: 4px; }
.g-insert { margin-left: 5px; }
.g-insert .group-label { padding-right: 5px; }
.s5 { margin-left: 3px; }
.g-select { margin-left: 7px; }
.finish { width: 93px; height: 59px; margin-left: 14px; background: #cce8f5; display: flex; flex-direction: column; align-items: center; }
.finish-ico { margin-top: 4px; margin-bottom: 3px; flex: none; }

/* viewport */
.viewport { position: relative; height: 848px; flex: none; margin-left: -1px; width: 1825px; overflow: hidden; background: #fff; }
.layer { position: absolute; left: 0; top: 0; }
.annot { pointer-events: none; }
.axis { font: 15.5px "Liberation Sans", sans-serif; fill: #8d8d8d; }
.dim { font: 16px "Liberation Sans", sans-serif; fill: #555; }
.note { font: bold 24px "Noto Sans CJK JP", sans-serif; fill: #111; font-feature-settings: "palt"; letter-spacing: .6px; }

.panel-bar { position: absolute; left: 5px; width: 300px; height: 25px; background: #f0f0f0; border: 1px solid #ccc; display: flex; align-items: center; }
.browser-bar { top: 4px; }
.comment-bar { top: 819px; }
.comment-bar .bar-title { margin-left: 23px; }
.rew { margin-left: 4px; }
.bar-title { color: #555; font-size: 10px; margin-top: -2px; }
.browser-bar .bar-title { margin-left: 9px; }
.round-minus, .round-plus { width: 9px; height: 9px; border-radius: 50%; background: #333; position: relative; flex: none; }
.round-minus::after { content: ""; position: absolute; left: 2px; right: 2px; top: 4px; height: 1px; background: #fff; }
.round-plus::after { content: ""; position: absolute; left: 2px; right: 2px; top: 4px; height: 1px; background: #fff; }
.round-plus::before { content: ""; position: absolute; left: 4px; top: 2px; bottom: 2px; width: 1px; background: #fff; }
.panel-bar .round-minus, .panel-bar .round-plus { margin-left: auto; }
.grip { width: 3px; height: 10px; border-left: 1px solid #777; border-right: 1px solid #bbb; margin: 0 1px 0 7px; flex: none; }

.tree { position: absolute; left: 22px; top: 34px; display: flex; flex-direction: column; gap: 4px; }
.row { display: flex; align-items: center; height: 20px; }
.lvl1 { margin-left: 19px; }
.lvl2 { margin-left: 55px; }
.twist { flex: none; width: 11px; margin-right: 8px; }
.chip { height: 20px; background: #f0f0f0; display: flex; align-items: center; padding-left: 3px; position: relative; white-space: nowrap; }
.lvl0 .chip { padding-left: 2px; width: 141px; }
.w118 { width: 118px; } .w90 { width: 90px; } .w91 { width: 91px; } .w99 { width: 99px; } .w103 { width: 103px; } .w107 { width: 107px; }
.teal { width: 3px; height: 18px; background: #63dde0; margin-right: 3px; }
.ico16 { width: 16px; height: 14px; flex: none; }
.root-box { width: 86px; height: 16px; margin-left: 4px; background: #8f8f8f; display: flex; align-items: center; padding-left: 3px; }
.root-name { color: #fff; font-weight: bold; margin: -1px 0 0 17px; font-size: 10.5px; letter-spacing: .9px; }
.radio-ico { margin-left: 4px; }
.lbl { color: #333; font-size: 10px; letter-spacing: -.3px; margin-top: -2px; }
.m13 { margin-left: 13px; } .m14 { margin-left: 14px; }
.ml9 { margin-left: 9px; }
.sk-ico { position: relative; width: 16px; height: 16px; display: inline-block; flex: none; }
.sk-ico > svg:first-child { position: absolute; left: 0; top: 0; }
.badge { position: absolute; right: -2px; bottom: -1px; }
.dotted::after { content: ""; position: absolute; left: 24px; right: 0; bottom: -1px; height: 3px; background: repeating-linear-gradient(135deg, #6b83b3 0 2px, transparent 2px 6px); }
.lvl2 .dotted::after { left: 24px; right: -2px; }

.cube { position: absolute; left: 1732px; top: 37px; width: 52px; height: 52px; border: 1px dashed #999; background: #f4f4f4; box-shadow: 4px 4px 10px rgba(0,0,0,.08); }
.cube-face { position: absolute; left: 9px; top: 9px; width: 33px; height: 32px; background: #e8e8ea; color: #8a8c92; font-size: 30px; line-height: 32px; text-align: center; }
.axis-y, .axis-x, .axis-z { position: absolute; font: 13px "Liberation Sans", sans-serif; }
.axis-y { left: 5px; top: -15px; color: #8fee8f; }
.axis-x { left: 59px; top: 41px; color: #f78c8c; }
.axis-z { left: -9px; top: 46px; color: #8f8fff; }

.palette { position: absolute; left: 1570px; top: 124px; width: 249px; height: 422px; background: #f0f0f0; border: 1px solid #ccc; }
.pal-head { height: 24px; border-bottom: 1px solid #ccc; display: flex; align-items: center; }
.pal-head .grip { margin: 0 0 0 2px; }
.pal-head .round-minus { margin-left: 8px; margin-right: 3px; }
.ffwd { margin-left: auto; margin-right: 4px; }
.pal-section { height: 30px; display: flex; align-items: center; gap: 4px; padding: 0 0 2px 5px; font-weight: bold; color: #333; }
.pal-row { height: 30px; display: grid; grid-template-columns: 130px 24px; align-items: center; justify-items: center; padding-left: 12px; }
.pal-row > span:first-child { justify-self: start; white-space: nowrap; grid-column: 1; font-size: 10px; letter-spacing: -.4px; margin-top: -2px; }
.ctrl-btn { width: 24px; height: 27px; background: #0696d7; border: 1px solid #4db0e0; border-radius: 1px; display: flex; align-items: center; justify-content: center; }
.chk { width: 14px; height: 14px; border: 1px solid #666; border-radius: 3px; background: linear-gradient(#fafafa, #bbb); position: relative; flex: none; }
.chk.on { background: #bdbdbd; }
.chk.on::after { content: ""; position: absolute; left: 4px; top: 0; width: 4px; height: 9px; border-right: 1.5px solid #111; border-bottom: 1.5px solid #111; transform: rotate(38deg) skewX(-8deg); }
.pal-foot { height: 37px; margin-top: 1px; border-top: 1px solid #ccc; display: flex; align-items: center; justify-content: flex-end; padding-right: 11px; }
.btn { font: 10.5px "Liberation Sans", "Noto Sans CJK JP", sans-serif; font-feature-settings: "palt"; background: #e6e6e6; border: 1px solid #bbb; color: #666; padding: 0; margin: 0; }
.finish-btn { width: 74px; height: 21px; }

.count-box { position: absolute; left: 894px; top: 465px; width: 110px; height: 22px; background: #f0f0f0; display: flex; align-items: center; padding-left: 23px; }
.count-input { width: 26px; height: 16px; background: #fff; border: 1px solid #ccc; color: #2a7fd0; line-height: 14px; padding-left: 2px; font-size: 11px; }
.spin { display: flex; flex-direction: column; justify-content: space-around; align-items: center; width: 12px; background: #e2e2e2; }
.spin .up, .spin .down { width: 0; height: 0; border-left: 2.500px solid transparent; border-right: 2.500px solid transparent; }
.spin .up { border-bottom: 3px solid #222; }
.spin .down { border-top: 3px solid #222; }
.spin.small { height: 16px; margin-left: 1px; }
.rot { margin-left: 16px; margin-right: 3px; }

.dialog { position: absolute; left: 1333px; top: 345px; width: 249px; height: 212px; background: #f0f0f0; border: 1px solid #aaa; }
.dlg-head { height: 23px; border-bottom: 1px solid #ccc; display: flex; align-items: center; gap: 5px; padding-left: 5px; }
.dlg-row { height: 30px; display: flex; align-items: center; padding-left: 12px; position: relative; }
.dlg-row > span:first-child { width: 61px; flex: none; font-size: 10px; letter-spacing: -.4px; margin-top: -2px; }
.sel-btn { width: 78px; height: 26px; background: #fff; border: 2px solid #e4e4e4; display: flex; align-items: center; gap: 3px; padding-left: 5px; white-space: nowrap; }
.sel-btn.on { background: #0696d7; border-color: #0696d7; color: #fff; }
.x-mark { margin-left: 10px; color: #666; font: bold 14px "DejaVu Sans", sans-serif; }
.select { width: 161px; height: 26px; background: #fff; border: 2px solid #e4e4e4; display: flex; align-items: center; gap: 5px; padding-left: 3px; position: relative; }
.caret.right { margin-left: auto; margin-right: 7px; }
.dlg-chk { margin-left: 4px; }
.num-input { width: 152px; height: 21px; margin-left: 6px; background: #fff; border: 1px solid #ccc; color: #2a7fd0; font-size: 11px; line-height: 19px; padding-left: 3px; position: relative; }
.num-input .spin { position: absolute; right: 0; top: 0; bottom: 0; }
.dlg-foot { height: 36px; margin-top: 2px; border-top: 1px solid #ccc; display: flex; align-items: center; padding-left: 8px; }
.ok { width: 60px; height: 18px; margin-left: 87px; color: #777; font-size: 11px; }
.cancel { width: 59px; height: 20px; margin-left: 11px; color: #666; }

.tooltip { position: absolute; left: 1151px; top: 361px; width: 221px; height: 14px; background: #f4f4f4; border: 1px solid #888; color: #111; font-size: 10.3px; line-height: 12px; white-space: nowrap; padding-left: 2px; overflow: hidden; }
.status { position: absolute; right: 37px; top: 824px; font-weight: bold; color: #333; font-size: 11px; white-space: nowrap; }

.navbar { position: absolute; left: 607px; top: 820px; width: 253px; height: 24px; background: #f0f0f0; display: flex; align-items: center; }
.i-orbit { margin-left: 3px; }
.c-a { margin-left: 1px; }
.i-look { margin-left: 6px; }
.i-hand { margin-left: 11px; }
.i-zoom { margin-left: 9px; }
.i-fit { margin-left: 9px; }
.c-b { margin-left: 2px; }
.i-disp { margin-left: 14px; }
.c-c { margin-left: 2px; }
.i-grid { margin-left: 7px; }
.c-d { margin-left: 2px; }
.i-view { margin-left: 9px; }
.c-e { margin-left: 5px; }

/* timeline */
.timeline { height: 51px; flex: none; background: #f0f0f0; border-top: 2px solid #ccc; border-bottom: 1px solid #ccc; position: relative; display: flex; align-items: center; }
.transport { display: flex; gap: 12px; margin-left: 11px; margin-bottom: 0; }
.history { position: relative; margin-left: 20px; width: 80px; height: 46px; flex: none; align-self: flex-start; }
.hist-bar { position: absolute; left: 0; top: 7px; width: 68px; height: 6px; background: #63dde0; }
.hist-items { position: absolute; left: 3px; top: 14px; width: 65px; display: flex; justify-content: space-between; }
.hist-group { position: absolute; left: 11px; top: 34px; width: 47px; height: 7px; border: 2px solid #ccc; border-top: 0; }
.marker { position: absolute; left: 64px; top: 9px; }
.tl-gear { margin-left: auto; margin-right: 14px; }

/* text command */
.textcmd { flex: 1; display: flex; flex-direction: column; background: #f0f0f0; }
.tc-head { height: 23px; display: flex; align-items: center; gap: 10px; padding-left: 6px; flex: none; }
.tc-output { height: 66px; margin: 0 2px; background: #fff; border: 1px solid #777; flex: none; }
.tc-foot { display: flex; align-items: center; margin-top: 2px; padding-left: 2px; }
.tc-input { width: 1701px; height: 20px; background: #fff; border: 1px solid #777; color: #555; font-size: 10.6px; line-height: 17px; padding-left: 2px; white-space: nowrap; }
.tc-radios { display: flex; align-items: center; margin-left: 3px; font: 11.5px "Liberation Sans", sans-serif; color: #333; }
.tc-radios span { margin: 0 10px 0 4px; }
.rad { width: 12px; height: 12px; border-radius: 50%; border: 1px solid #444; background: #fff; position: relative; flex: none; }
.rad.on::after { content: ""; position: absolute; left: 2px; top: 2px; width: 6px; height: 6px; border-radius: 50%; background: #333; }
```
